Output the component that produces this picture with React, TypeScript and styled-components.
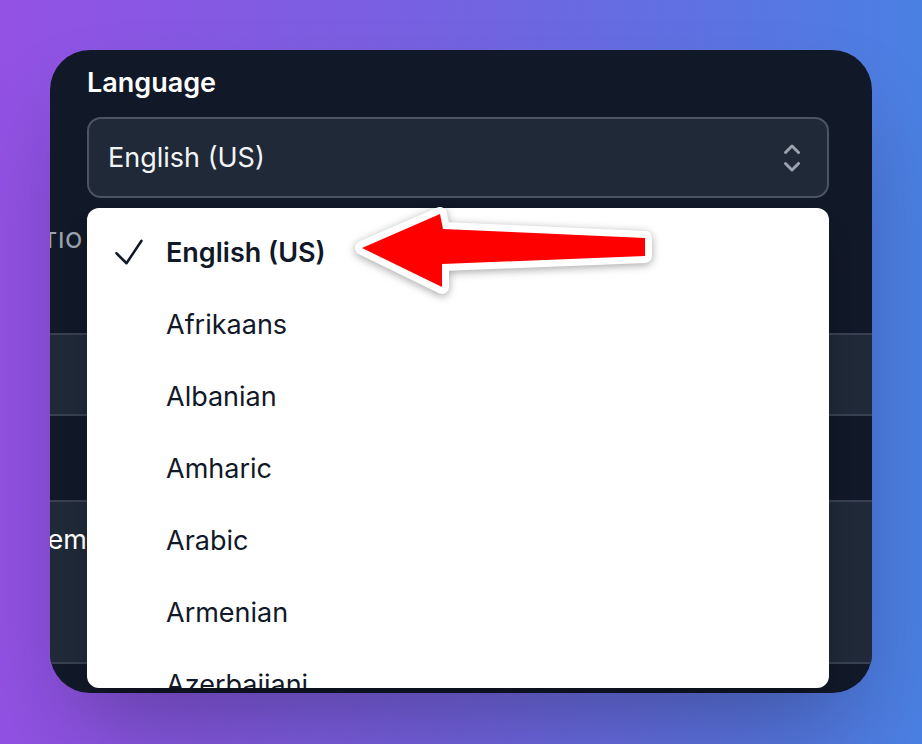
import React from "react";
import styled, { createGlobalStyle } from "styled-components";

const Global = createGlobalStyle`
  html, body { margin: 0; padding: 0; }
  body {
    width: 922px;
    height: 744px;
    overflow: hidden;
    font-family: Inter, "Noto Sans", "Liberation Sans", sans-serif;
    -webkit-font-smoothing: antialiased;
  }
`;

const Stage = styled.div`
  width: 922px;
  height: 744px;
  box-sizing: border-box;
  padding: 50px 50px 0 50px;
  background: linear-gradient(90deg, #9351e4 0%, #7463e2 50%, #4a80e2 100%);
`;

const Card = styled.div`
  position: relative;
  width: 822px;
  height: 643px;
  box-sizing: border-box;
  border-radius: 40px;
  background: #111827;
  overflow: hidden;
  box-shadow: 0 50px 100px -24px rgba(0, 0, 0, 0.3);
  padding-top: 13px;
  display: flex;
  flex-direction: column;
`;

const Field = styled.div`
  padding: 0 43px 0 37px;
  display: flex;
  flex-direction: column;
  gap: 14px;
`;

const Label = styled.label`
  font-size: 27px;
  line-height: 40px;
  font-weight: 600;
  color: #ffffff;
`;

const SelectButton = styled.div`
  height: 81px;
  box-sizing: border-box;
  border: 2px solid #4b5563;
  border-radius: 14px;
  background: #1f2937;
  display: flex;
  align-items: center;
  justify-content: space-between;
  padding: 0 15px 0 19px;
  font-size: 27px;
  color: #f3f4f6;
`;

const Backdrop = styled.div`
  display: flex;
  flex-direction: column;
`;

const SectionHead = styled.div`
  height: 135px;
  display: flex;
`;

const EdgeCell = styled.div`
  width: 33px;
  flex: none;
  display: flex;
  justify-content: flex-end;
  white-space: nowrap;
  padding-top: 29px;
`;

const SectionTitle = styled.span`
  font-size: 22px;
  letter-spacing: 1px;
  color: #9ca3af;
  font-weight: 500;
  line-height: 26px;
`;

const Row = styled.div<{ $h: number; $filled?: boolean }>`
  height: ${(p) => p.$h}px;
  box-sizing: border-box;
  border-top: 2px solid #374151;
  background: ${(p) => (p.$filled ? "#1f2937" : "transparent")};
  display: flex;
`;

const RowEdge = styled.div`
  width: 37px;
  flex: none;
  display: flex;
  justify-content: flex-end;
  white-space: nowrap;
  padding-top: 18px;
`;

const RowText = styled.span`
  font-size: 27px;
  line-height: 40px;
  color: #ffffff;
`;

const Menu = styled.ul`
  position: absolute;
  left: 37px;
  top: 158px;
  width: 742px;
  height: 480px;
  margin: 0;
  padding: 8px 0 0;
  box-sizing: border-box;
  list-style: none;
  background: #ffffff;
  border-radius: 12px;
  overflow: hidden;
  box-shadow: 0 20px 30px -10px rgba(0, 0, 0, 0.35);
`;

const Item = styled.li<{ $selected?: boolean }>`
  height: 72px;
  display: flex;
  align-items: center;
  padding-left: 22px;
  font-size: 27px;
  color: #111827;
  font-weight: ${(p) => (p.$selected ? 600 : 400)};
`;

const IconSlot = styled.span`
  width: 57px;
  height: 40px;
  flex: none;
  display: flex;
  align-items: center;
`;

const Arrow = styled.svg`
  position: absolute;
  left: 290px;
  top: 150px;
  overflow: visible;
  filter: drop-shadow(0 2px 4px rgba(0, 0, 0, 0.35));
`;

const CheckIcon = () => (
  <svg width="40" height="40" viewBox="0 0 24 24" fill="none">
    <path
      d="m4.5 12.75 6 6 9-13.5"
      stroke="#111827"
      strokeWidth="1.5"
      strokeLinecap="round"
      strokeLinejoin="round"
    />
  </svg>
);

const UpDownIcon = () => (
  <svg width="40" height="40" viewBox="0 0 20 20" fill="#9ca3af">
    <path
      fillRule="evenodd"
      d="M10.53 3.47a.75.75 0 0 0-1.06 0L6.22 6.72a.75.75 0 0 0 1.06 1.06L10 5.06l2.72 2.72a.75.75 0 1 0 1.06-1.06l-3.25-3.25Zm-4.31 9.81 3.25 3.25a.75.75 0 0 0 1.06 0l3.25-3.25a.75.75 0 1 0-1.06-1.06L10 14.94l-2.72-2.72a.75.75 0 0 0-1.06 1.06Z"
      clipRule="evenodd"
    />
  </svg>
);

const languages = [
  "English (US)",
  "Afrikaans",
  "Albanian",
  "Amharic",
  "Arabic",
  "Armenian",
  "Azerbaijani",
  "Basque",
];

export default function App() {
  return (
    <>
      <Global />
      <Stage>
        <Card>
          <Field>
            <Label>Language</Label>
            <SelectButton>
              <span>English (US)</span>
              <UpDownIcon />
            </SelectButton>
          </Field>
          <Backdrop>
            <SectionHead>
              <EdgeCell>
                <SectionTitle>NOTIFICATIO</SectionTitle>
              </EdgeCell>
            </SectionHead>
            <Row $h={81} $filled />
            <Row $h={86} />
            <Row $h={162} $filled>
              <RowEdge>
                <RowText>System</RowText>
              </RowEdge>
            </Row>
            <Row $h={80} />
          </Backdrop>
          <Menu>
            {languages.map((l, i) => (
              <Item key={l} $selected={i === 0}>
                <IconSlot>{i === 0 ? <CheckIcon /> : null}</IconSlot>
                {l}
              </Item>
            ))}
          </Menu>
          <Arrow width="300" height="90" viewBox="290 150 300 90">
            <polygon
              points="312,198 390,164 393,179 595,188 595,206 392,214 392,237"
              fill="#ff0000"
              stroke="#ffffff"
              strokeWidth="14"
              strokeLinejoin="round"
              paintOrder="stroke"
            />
          </Arrow>
        </Card>
      </Stage>
    </>
  );
}
